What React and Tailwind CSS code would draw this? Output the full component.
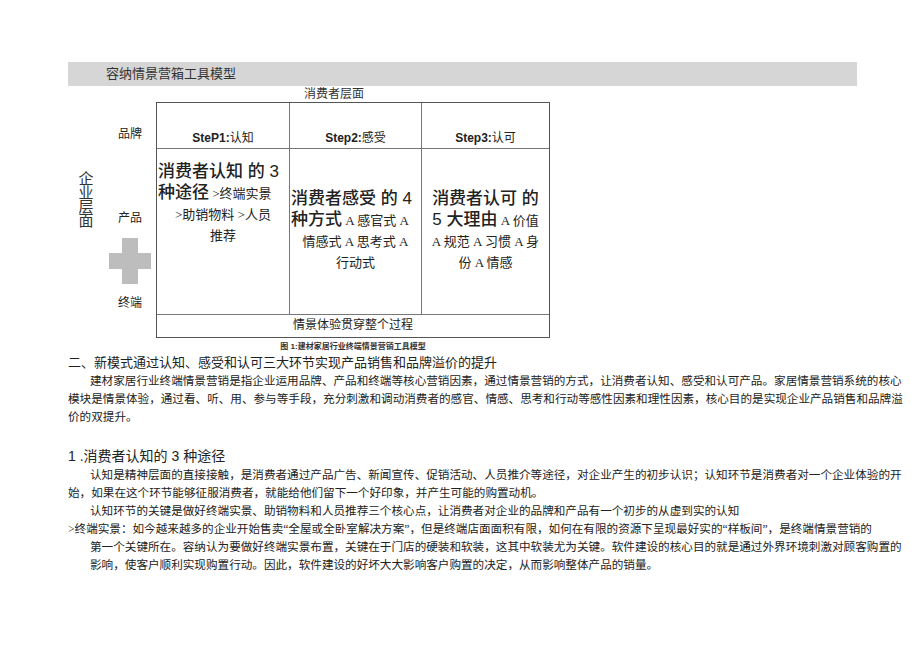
export default function App() {
  const f = { fontFamily: '"Liberation Serif","Noto Sans CJK SC",serif' };
  const fs = { fontFamily: '"Liberation Sans","Noto Sans CJK SC",sans-serif' };
  const J = ({ children, last, cls = "" }) => (
    <div className={"h-[18px] leading-[18px] whitespace-nowrap overflow-visible text-justify " + (last ? "" : "[text-align-last:justify] ") + cls}>{children}</div>
  );
  return (
    <div className="w-[920px] h-[651px] bg-white text-[#222] relative overflow-hidden" style={f}>
      <div className="mt-[62px] ml-[68px] w-[789px] h-[24px] bg-[#d6d6d6] text-[13px] leading-[24px] pl-[38px] text-[#333]">容纳情景营箱工具模型</div>
      <div className="ml-[68px] flex">
        <div className="w-[88px] h-[252px] flex pt-[16px]">
          <div className="w-[36px] flex items-start justify-center pt-[70px]">
            <div className="text-[15px] leading-[14px] w-[15px] text-[#333]">企业层面</div>
          </div>
          <div className="flex flex-col items-center w-[52px]">
            <div className="text-[12px] mt-[24px] h-[16px] leading-[16px]">品牌</div>
            <div className="text-[12px] mt-[68px] h-[16px] leading-[16px]">产品</div>
            <svg className="mt-[12px]" width="42" height="46" viewBox="0 0 42 46">
              <path d="M13 0h16v15h13v16H29v15H13V31H0V15h13z" fill="#bdbdbd" />
            </svg>
            <div className="text-[12px] mt-[11px] h-[16px] leading-[16px]">终端</div>
          </div>
        </div>
        <div className="w-[394px]">
          <div className="text-[12px] h-[16px] leading-[16px] text-center -ml-[18px] pr-[20px] text-[#333]">消费者层面</div>
          <div className="border border-[#555] w-[394px]">
            <div className="grid grid-cols-[133px_132px_127px] h-[46px] border-b border-[#777]">
              {[["SteP1:", "认知"], ["Step2:", "感受"], ["Step3:", "认可"]].map((t, i) => (
                <div key={i} className={"flex items-end justify-center pb-[1px] text-[12px] " + (i < 2 ? "border-r border-[#777]" : "")}>
                  <span style={fs} className="font-bold">{t[0]}</span><span>{t[1]}</span>
                </div>
              ))}
            </div>
            <div className="grid grid-cols-[133px_132px_127px] h-[166px] border-b border-[#777] text-center">
              <div className="border-r border-[#777] pt-[12px] px-[1px] text-[13px] leading-[21px]">
                <div className="text-left text-[17px] leading-[21px] font-medium whitespace-nowrap" style={fs}>消费者认知 的 3</div>
                <div className="text-left whitespace-nowrap"><span className="text-[17px] font-medium" style={fs}>种途径</span> &gt;终端实景</div>
                <div className="whitespace-nowrap">&gt;助销物料 &gt;人员</div>
                <div>推荐</div>
              </div>
              <div className="border-r border-[#777] pt-[39px] px-[1px] text-[13px] leading-[21px]">
                <div className="text-left text-[17px] font-medium whitespace-nowrap" style={fs}>消费者感受 的 4</div>
                <div className="text-left whitespace-nowrap"><span className="text-[17px] font-medium" style={fs}>种方式</span> A 感官式 A</div>
                <div className="whitespace-nowrap">情感式 A 思考式 A</div>
                <div>行动式</div>
              </div>
              <div className="pt-[39px] px-[2px] text-[13px] leading-[21px]">
                <div className="text-[17px] font-medium whitespace-nowrap" style={fs}>消费者认可 的</div>
                <div className="whitespace-nowrap"><span className="text-[17px] font-medium" style={fs}>5 大理由</span> A 价值</div>
                <div className="whitespace-nowrap">A 规范 A 习惯 A 身</div>
                <div>份 A 情感</div>
              </div>
            </div>
            <div className="h-[22px] text-center text-[12px] leading-[20px]">情景体验贯穿整个过程</div>
          </div>
          <div className="text-[8px] font-bold text-center mt-[3px] h-[12px] leading-[12px] text-[#333]" style={fs}>图 1:建材家居行业终端情景营销工具模型</div>
        </div>
      </div>
      <div className="ml-[68px] w-[789px] text-[11.6px]">
        <div className="text-[13px] h-[20px] leading-[20px]">二、新模式通过认知、感受和认可三大环节实现产品销售和品牌溢价的提升</div>
        <J cls="pl-[22px]">建材家居行业终端情景营销是指企业运用品牌、产品和终端等核心营销因素，通过情景营销的方式，让消费者认知、感受和认可产品。家居情景营销系统的核心</J>
        <J>模块是情景体验，通过看、听、用、参与等手段，充分刺激和调动消费者的感官、情感、思考和行动等感性因素和理性因素，核心目的是实现企业产品销售和品牌溢</J>
        <J last>价的双提升。</J>
        <div className="h-[18px]" />
        <div className="text-[14px] h-[22px] leading-[22px]" style={fs}>1 .消费者认知的 3 种途径</div>
        <J cls="pl-[22px]">认知是精神层面的直接接触，是消费者通过产品广告、新闻宣传、促销活动、人员推介等途径，对企业产生的初步认识；认知环节是消费者对一个企业体验的开</J>
        <J last>始，如果在这个环节能够征服消费者，就能给他们留下一个好印象，并产生可能的购置动机。</J>
        <J last cls="pl-[22px]">认知环节的关键是做好终端实景、助销物料和人员推荐三个核心点，让消费者对企业的品牌和产品有一个初步的从虚到实的认知</J>
        <J>&gt;终端实景：如今越来越多的企业开始售卖“全屋或全卧室解决方案”，但是终端店面面积有限，如何在有限的资源下呈现最好实的“样板间”，是终端情景营销的</J>
        <J cls="pl-[22px]">第一个关键所在。容纳认为要做好终端实景布置，关键在于门店的硬装和软装，这其中软装尤为关键。软件建设的核心目的就是通过外界环境刺激对顾客购置的</J>
        <J last cls="pl-[22px]">影响，使客户顺利实现购置行动。因此，软件建设的好坏大大影响客户购置的决定，从而影响整体产品的销量。</J>
      </div>
    </div>
  );
}
